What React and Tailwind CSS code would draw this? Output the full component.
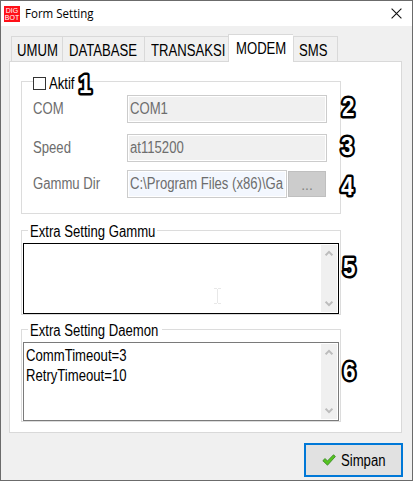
import React from 'react';

function Label({ children, className = '' }) {
  return (
    <span className={`inline-block origin-left scale-x-[0.82] whitespace-nowrap text-[16px] leading-[20px] ${className}`}>
      {children}
    </span>
  );
}

function Tab({ name, className }) {
  return (
    <div className={`shrink-0 border-t border-l border-[#d9d9d9] ${className}`}>
      <Label>{name}</Label>
    </div>
  );
}

function Legend({ children, className }) {
  return (
    <div className={`ml-[6px] -mt-[9px] h-[20px] overflow-hidden bg-white pl-[2px] leading-[20px] ${className}`}>
      <Label>{children}</Label>
    </div>
  );
}

function Arrow({ down }) {
  return (
    <svg width="8" height="7" viewBox="0 0 8 7" className={down ? 'rotate-180' : ''} fill="none" stroke="#bcbcbc" strokeWidth="2">
      <path d="M.6 5.3 4 1.9l3.4 3.4" />
    </svg>
  );
}

function Memo({ className, children }) {
  return (
    <div className={`ml-px flex w-[316px] border bg-white p-px ${className}`}>
      <div className="flex-1 pl-px">{children}</div>
      <div className="flex w-[16px] flex-col items-center justify-between bg-[#f0f0f0] py-[5px]">
        <Arrow />
        <Arrow down />
      </div>
    </div>
  );
}

function Row({ label, children, className = '' }) {
  return (
    <div className={`flex h-[28px] items-center pl-[11px] text-[#6d6d6d] ${className}`}>
      <div className="w-[94px] shrink-0 leading-[20px]"><Label>{label}</Label></div>
      {children}
    </div>
  );
}

function Field({ value, className }) {
  return (
    <div className={`flex h-[28px] shrink-0 items-center overflow-hidden border border-[#cccccc] pl-[2px] shadow-[inset_0_0_0_1px_#fff] ${className}`}>
      <Label>{value}</Label>
    </div>
  );
}

function Marker({ n, x, y }) {
  return (
    <text transform={`translate(${x} ${y}) scale(0.9 1)`} fontSize="25" fontWeight="700" fill="#fff" stroke="#000" strokeWidth="5" strokeLinejoin="round" paintOrder="stroke">
      {n}
    </text>
  );
}

export default function App() {
  return (
    <div className="relative flex h-[481px] w-[413px] flex-col overflow-hidden border border-[#6b6b6b] bg-[#f0f0f0] font-['Liberation_Sans',Arial,sans-serif] text-black">
      <header className="flex h-[25px] shrink-0 items-center justify-between bg-white pr-[10px] pl-[3px]">
        <div className="flex items-center">
          <div className="flex h-[16px] w-[16px] flex-col items-center justify-center bg-[#ff1018] text-[7px] leading-[7px] text-white">
            <span>DIG</span>
            <span>BOT</span>
          </div>
          <span className="ml-[5px] inline-block origin-left scale-x-[0.96] font-['Open_Sans',sans-serif] text-[12px] leading-[18px]">Form Setting</span>
        </div>
        <svg width="11" height="11" viewBox="0 0 11 11" stroke="#111" strokeWidth="1.1">
          <path d="m.6.6 9.8 9.8M10.4.6.6 10.4" />
        </svg>
      </header>

      <nav className="z-10 mt-[8px] ml-[10px] flex h-[28px] shrink-0 items-end">
        <Tab name="UMUM" className="h-[26px] w-[51px] pt-[2px] pl-[5px]" />
        <Tab name="DATABASE" className="h-[26px] w-[82px] pt-[2px] pl-[6px]" />
        <Tab name="TRANSAKSI" className="h-[26px] w-[84px] pt-[2px] pl-[6px]" />
        <Tab name="MODEM" className="h-[28px] w-[65px] bg-white pt-[2px] pl-[7px]" />
        <Tab name="SMS" className="h-[26px] w-[45px] border-r pt-[2px] pl-[5px]" />
      </nav>

      <main className="-mt-px ml-[8px] h-[372px] w-[393px] shrink-0 border border-[#d9d9d9] bg-white pt-[19px] pl-[11px]">
        <section className="h-[133px] w-[320px] border border-[#dcdcdc]">
          <div className="-mt-[11px] ml-[11px] flex h-[25px] w-[46px] items-center bg-white">
            <div className="h-[13px] w-[13px] shrink-0 border border-[#333] bg-white" />
            <Label className="ml-[3px]">Aktif</Label>
          </div>
          <Row label="COM" className="-mt-px">
            <Field value="COM1" className="w-[200px] bg-[#f0f0f0]" />
          </Row>
          <Row label="Speed" className="mt-[11px]">
            <Field value="at115200" className="w-[200px] bg-[#f0f0f0]" />
          </Row>
          <Row label="Gammu Dir" className="mt-[8px]">
            <Field value="C:\Program Files (x86)\Ga" className="w-[160px] bg-[#f3f7fe]" />
            <div className="ml-px flex h-[26px] w-[38px] shrink-0 items-center justify-center border border-[#bfbfbf] bg-[#cccccc] pt-[2px] text-[14px] text-[#838383]">...</div>
          </Row>
        </section>

        <section className="mt-[16px] h-[85px] w-[320px] border border-[#dcdcdc]">
          <Legend className="w-[129px]">Extra Setting Gammu</Legend>
          <Memo className="mt-px h-[71px] border-black" />
        </section>

        <section className="mt-[14px] h-[93px] w-[320px] border border-[#dcdcdc]">
          <Legend className="w-[134px]">Extra Setting Daemon</Legend>
          <Memo className="mt-px h-[79px] border-[#7a7a7a]">
            <div className="flex flex-col pt-[2px]">
              <Label>CommTimeout=3</Label>
              <Label>RetryTimeout=10</Label>
            </div>
          </Memo>
        </section>
      </main>

      <footer className="mt-[10px] flex justify-end pr-[9px]">
        <button className="flex h-[34px] w-[99px] items-center border-2 border-[#0078d7] bg-[#e1e1e1] pl-[16px]">
          <svg width="14" height="12" viewBox="0 0 14 12" className="shrink-0">
            <path d="M.8 6.7 3 4.6l2.5 2.3L11.5.8l1.9 1.7-7.9 8.7Z" fill="#55c41f" stroke="#3d8b2a" strokeWidth=".9" />
          </svg>
          <Label className="mt-[2px] ml-[5px]">Simpan</Label>
        </button>
      </footer>

      <svg width="413" height="481" viewBox="0 0 413 481" className="pointer-events-none absolute -top-px -left-px z-20">
        <Marker n="1" x="79" y="93" />
        <Marker n="2" x="342" y="115.5" />
        <Marker n="3" x="341" y="154.8" />
        <Marker n="4" x="341" y="195.3" />
        <Marker n="5" x="343" y="275.8" />
        <Marker n="6" x="343" y="379.8" />
        <path d="M214 288.5h3m1 0h3M217.500 289v14M214 303.500h3m1 0h3" stroke="#e8e8e8" fill="none" />
      </svg>
    </div>
  );
}
